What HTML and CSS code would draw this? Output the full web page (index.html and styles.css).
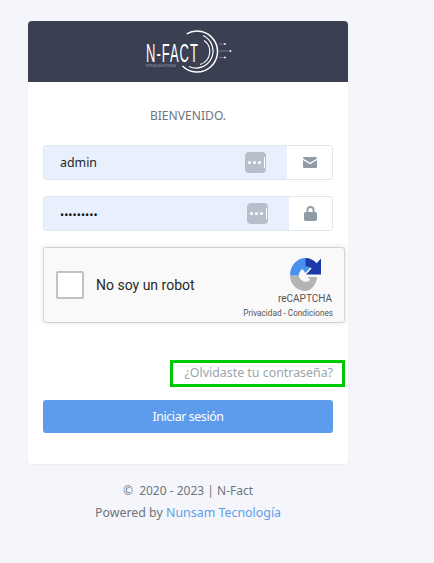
FILE: index.html
```html
<!DOCTYPE html>
<html lang="es">
<head>
<meta charset="utf-8">
<title>N-Fact</title>
<link rel="stylesheet" href="styles.css">
</head>
<body>
<main class="page">
  <section class="card">
    <header class="card-head">
      <svg class="logo" width="90" height="44" viewBox="0 0 90 44" aria-label="N-Fact">
        <g fill="none" stroke="#fff">
          <path d="M41.700 3.800 A20.500 20.500 0 1 1 37.500 36" stroke-width="1.500"/>
          <path d="M58 5.500 A17 17 0 0 1 44 36.500" stroke-width="1.200"/>
          <path d="M59 10.500 A13.500 13.500 0 0 1 55 34.500" stroke-width="1.100"/>
          <path d="M74 14 H79 M74 21 H85 M74 27.500 H79" stroke-width=".6" stroke="#9a9eb0"/>
        </g>
        <g fill="#fff"><circle cx="80" cy="14" r=".9"/><circle cx="85.500" cy="21" r=".9"/><circle cx="80" cy="27.500" r=".9"/></g>
        <text class="logo-name" transform="translate(1 31.700) scale(.5 1)">N-FACT</text>
        <text class="logo-sub" transform="translate(1 36.500) scale(.68 1)">NOTIFICACION ELECTRONICA</text>
      </svg>
    </header>
    <div class="card-body">
      <p class="welcome">BIENVENIDO.</p>
      <form class="form">
        <div class="field">
          <div class="field-input">
            <span class="value">admin</span>
            <span class="key"><i></i><i></i><i></i><b></b></span>
          </div>
          <span class="addon addon-user">
            <svg width="14" height="11" viewBox="0 0 14 11"><path fill="#8f9ba6" d="M1.300 0h11.400c.7 0 1.300.6 1.300 1.300v.3L7 5.800 0 1.600v-.3C0 .6.600 0 1.300 0zM0 3l7 4.300L14 3v6.700c0 .7-.6 1.300-1.300 1.300H1.300C.6 11 0 10.400 0 9.700z"/></svg>
          </span>
        </div>
        <div class="field">
          <div class="field-input">
            <span class="dots">•••••••••</span>
            <span class="key"><i></i><i></i><i></i><b></b></span>
          </div>
          <span class="addon addon-pass">
            <svg width="13" height="15" viewBox="0 0 13 15"><path fill="#8f9ba6" fill-rule="evenodd" d="M2.500 6V4a4 4 0 0 1 8 0v2h.8c.9 0 1.700.8 1.700 1.700v5.600c0 .9-.8 1.700-1.700 1.700H1.700C.8 15 0 14.200 0 13.300V7.700C0 6.800.8 6 1.700 6zm1.900 0h4.200V4a2.100 2.100 0 0 0-4.200 0z"/></svg>
          </span>
        </div>
        <div class="captcha">
          <span class="captcha-box"></span>
          <span class="captcha-label">No soy un robot</span>
          <div class="captcha-brand">
            <svg class="brand-icon" width="31" height="33" viewBox="0 0 32 32" preserveAspectRatio="none">
              <path fill="#b4b4b4" d="M0 17h9c.6 3.200 3.500 6 7 6 2 0 3.800-.8 5-2l-3-2.500h10C27 26 22 32 16 32 7.200 32 0 25.600 0 17z"/>
              <path fill="#4a90ee" d="M16 0C7.200 0 0 7.200 0 17h9c.3-2.800 1.500-4.800 3.800-6.300l3.200 3.800L22 8z"/>
              <path fill="#1c3aa9" d="M16 0c4.500 0 8.600 1.900 11.500 5L32 .5V16H16.500l5.800-5.800C20.800 8.700 18.500 8 16 8z"/>
            </svg>
            <span class="brand-name">reCAPTCHA</span>
            <span class="brand-links">Privacidad - Condiciones</span>
          </div>
        </div>
        <div class="forgot-row"><a class="forgot" href="#">¿Olvidaste tu contraseña?</a></div>
        <button class="submit" type="button">Iniciar sesión</button>
      </form>
    </div>
  </section>
  <footer class="foot">
    <p class="copy">©&nbsp; 2020 - 2023 | N-Fact</p>
    <p>Powered by <a href="#">Nunsam Tecnología</a></p>
  </footer>
</main>
</body>
</html>
```
FILE: styles.css
```css
* { box-sizing: border-box; }
html, body { margin: 0; height: 100%; }
body {
  background: #f5f6fb;
  font-family: "Noto Sans", "Open Sans", sans-serif;
  font-size: 12.4px;
  color: #6c757d;
  overflow: hidden;
}
.page { width: 320px; margin-left: 28px; padding-top: 21px; }
.card {
  height: 443px;
  background: #fff;
  border-radius: 4px;
  box-shadow: 0 1px 2px rgba(50, 58, 80, .06);
  overflow: hidden;
}
.card-head {
  height: 61px;
  background: #3a3f51;
  display: flex;
  justify-content: center;
  align-items: flex-start;
  padding-top: 9px;
  padding-left: 4px;
}
.logo-name { font-family: "Liberation Sans", sans-serif; font-size: 26px; letter-spacing: 2px; fill: #fff; }
.logo-sub { font-family: "Liberation Sans", sans-serif; font-size: 3px; fill: #a9adba; }
.card-body { padding: 25px 15px 0; }
.welcome { margin: 0 0 20px; text-align: center; font-size: 12.1px; line-height: 18px; color: #6c757d; }
.form { display: flex; flex-direction: column; }
.field {
  display: flex;
  height: 35px;
  border: 1px solid #dee7ec;
  border-radius: 3px;
  margin-bottom: 16px;
  overflow: hidden;
}
.field-input {
  flex: 1;
  background: #e8f0fe;
  display: flex;
  align-items: center;
  padding-left: 16px;
  padding-right: 21px;
  padding-bottom: 1px;
  justify-content: space-between;
}
.value { color: #212529; }
.dots { color: #111; font-size: 11px; letter-spacing: .05px; position: relative; top: 1px; }
.addon { display: flex; align-items: center; justify-content: center; background: #fff; }
.addon-user { width: 45px; }
.addon-pass { width: 43px; }
.key {
  width: 21px;
  height: 21px;
  border-radius: 4px;
  background: #b8bfca;
  display: flex;
  align-items: center;
  padding-left: 3px;
  gap: 2px;
}
.key i { width: 3px; height: 3px; border-radius: 50%; background: #fff; }
.key b { width: 1px; height: 11px; background: #fff; margin-left: 1px; }
.captcha {
  height: 76px;
  width: 302px;
  border: 1px solid #d3d3d3;
  border-radius: 3px;
  background: #f9f9f9;
  box-shadow: 0 0 4px 1px rgba(0, 0, 0, .08);
  display: flex;
  align-items: center;
  padding-left: 12px;
  padding-right: 11px;
  font-family: Roboto, "Liberation Sans", sans-serif;
}
.captcha-box {
  width: 28px;
  height: 28px;
  border: 2px solid #c1c1c1;
  border-radius: 2px;
  background: #fff;
}
.captcha-label { margin-left: 12px; font-size: 14px; color: #282828; }
.captcha-brand {
  margin-left: auto;
  margin-top: 6px;
  display: flex;
  flex-direction: column;
  align-items: flex-end;
  color: #555;
}
.brand-icon { margin-right: 12px; }
.brand-name { font-size: 10px; line-height: 12px; margin-top: 2px; margin-right: 1px; }
.brand-links { font-size: 8.200px; line-height: 10px; margin-top: 3px; white-space: nowrap; }
.forgot-row { display: flex; justify-content: flex-end; margin-top: 37px; }
.forgot {
  width: 175px;
  height: 27px;
  border: 3px solid #00c800;
  display: block;
  text-align: right;
  padding-right: 9px;
  line-height: 20px;
  color: #98a6ad;
  text-decoration: none;
  margin-right: -12px;
}
.submit {
  margin-top: 13px;
  height: 33px;
  border: 0;
  border-radius: 3px;
  background: #5d9cec;
  color: #fff;
  font: inherit;
  letter-spacing: -.4px;
  padding-bottom: 2px;
}
.foot { text-align: center; margin-top: 16px; }
.foot p { margin: 0; line-height: 22px; }
.foot .copy { font-size: 12px; }
.foot a { color: #5d9cec; text-decoration: none; }
```
